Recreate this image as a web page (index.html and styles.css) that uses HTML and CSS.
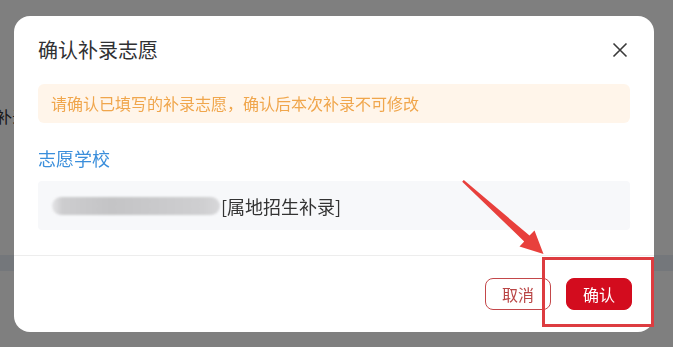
FILE: index.html
```html
<!DOCTYPE html>
<html lang="zh-CN">
<head>
<meta charset="utf-8">
<title>确认补录志愿</title>
<link rel="stylesheet" href="styles.css">
</head>
<body>
<div class="page">
  <div class="page-row">补录志愿</div>
  <div class="page-band"></div>
</div>
<div class="mask">
  <div class="dialog">
    <div class="dialog-header">
      <span class="dialog-title">确认补录志愿</span>
      <svg class="close" width="16" height="16" viewBox="0 0 16 16"><path d="M1.5 1.5 L14.5 14.5 M14.5 1.5 L1.5 14.5" stroke="#3a3a3a" stroke-width="1.6" fill="none"/></svg>
    </div>
    <div class="dialog-body">
      <div class="warning">请确认已填写的补录志愿，确认后本次补录不可修改</div>
      <div class="label">志愿学校</div>
      <div class="school"><span class="blurred"></span><span>[属地招生补录]</span></div>
    </div>
    <div class="dialog-footer">
      <button class="btn btn-cancel">取消</button>
      <button class="btn btn-ok">确认</button>
    </div>
  </div>
</div>
<svg class="annot" width="673" height="347" viewBox="0 0 673 347">
  <polygon points="463.8,180 529.5,235.6 534.5,230.5 543.5,254 519.5,246.5 524.2,241.4 462.2,181.8" fill="#e8403c"/>
</svg>
<div class="highlight"></div>
</body>
</html>
```
FILE: styles.css
```css
html, body {
  margin: 0;
  padding: 0;
}
body {
  width: 673px;
  height: 347px;
  overflow: hidden;
  position: relative;
  background: #ffffff;
  font-family: "Noto Sans CJK SC", "Noto Sans", sans-serif;
}
.page {
  padding-top: 104px;
}
.page-row {
  margin-left: -4px;
  font-size: 16px;
  line-height: 24px;
  color: #333;
}
.page-band {
  margin-top: 127px;
  height: 16px;
  background: #e9eef7;
}
.mask {
  position: fixed;
  inset: 0;
  background: rgba(0, 0, 0, 0.5);
  padding: 16px 0 0 14px;
}
.dialog {
  width: 640px;
  height: 316px;
  background: #fff;
  border-radius: 16px;
  display: flex;
  flex-direction: column;
}
.dialog-header {
  display: flex;
  justify-content: space-between;
  align-items: center;
  padding: 20px 26px 0 24px;
  height: 28px;
}
.dialog-title {
  font-size: 20px;
  line-height: 28px;
  color: #303133;
}
.close {
  display: block;
}
.dialog-body {
  padding: 20px 24px 25px;
  border-bottom: 1px solid #ededed;
}
.warning {
  height: 39px;
  line-height: 39px;
  padding: 0 13px;
  background: #fff5ea;
  border-radius: 6px;
  color: #f0a64c;
  font-size: 16px;
}
.label {
  margin-top: 22px;
  font-size: 18px;
  line-height: 26px;
  color: #3a8edb;
}
.school {
  margin-top: 10px;
  height: 49px;
  background: #f7f8fa;
  border-radius: 4px;
  display: flex;
  align-items: center;
  padding: 0 14px;
  font-size: 18px;
  color: #333;
}
.blurred {
  display: inline-block;
  width: 168px;
  height: 18px;
  border-radius: 9px;
  background: linear-gradient(90deg, #e4e4e6 0%, #cdcdcf 6%, #c4c4c6 35%, #c9c9cb 60%, #cfcfd1 90%, #d8d8da 100%);
  filter: blur(1.2px);
  margin-right: 1px;
}
.dialog-footer {
  display: flex;
  justify-content: flex-end;
  gap: 15px;
  padding: 22px 22px 0 0;
}
.btn {
  width: 66px;
  height: 32px;
  border-radius: 8px;
  font-family: inherit;
  font-size: 16px;
  padding: 0;
  cursor: pointer;
}
.btn-cancel {
  background: #fff;
  border: 1px solid #c3474a;
  color: #b94545;
}
.btn-ok {
  background: #d30c1e;
  border: 1px solid #d30c1e;
  color: #fff;
}
.annot {
  position: absolute;
  left: 0;
  top: 0;
  pointer-events: none;
}
.highlight {
  position: absolute;
  left: 542px;
  top: 257px;
  width: 106px;
  height: 64px;
  border: 3px solid #dd3c40;
  pointer-events: none;
}
```
